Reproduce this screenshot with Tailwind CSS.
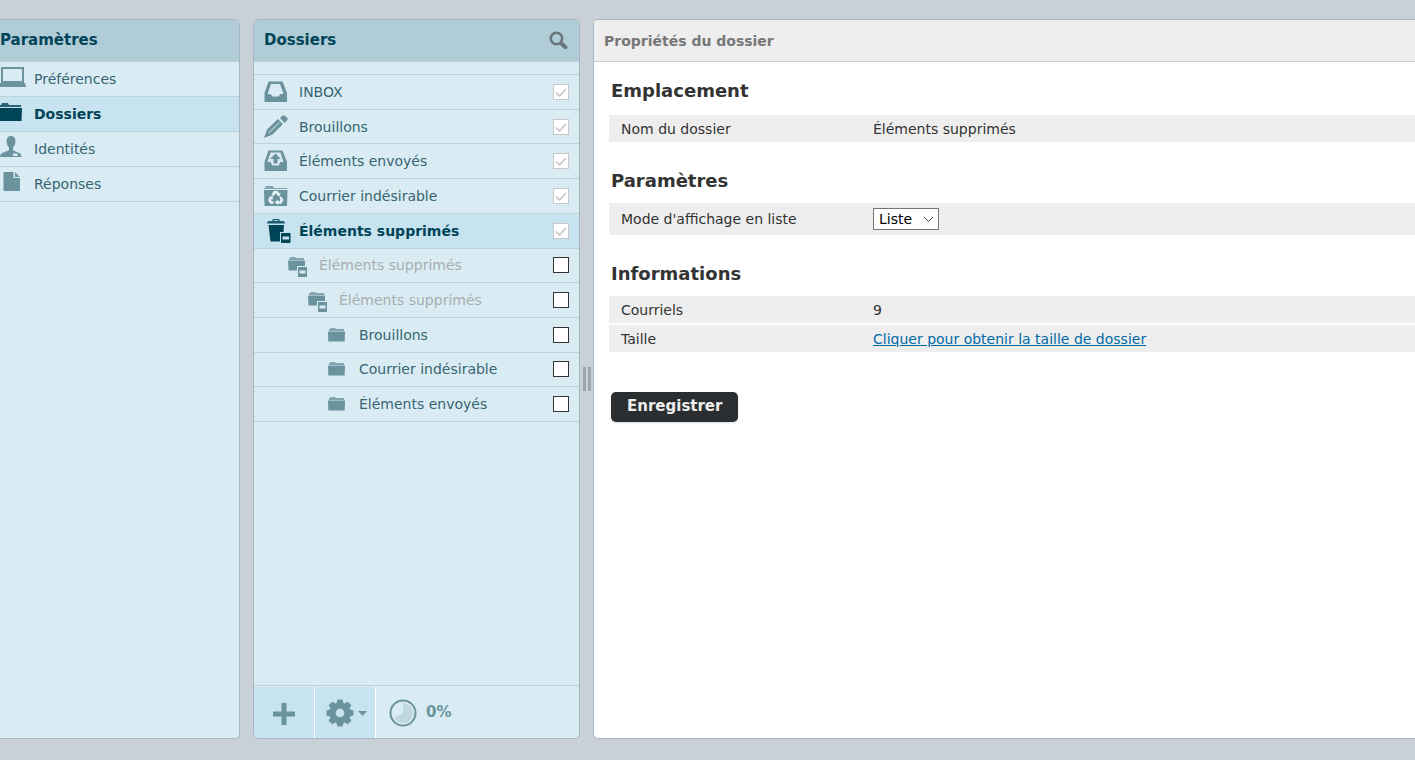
<!DOCTYPE html>
<html lang="fr">
<head>
<meta charset="utf-8">
<title>Dossiers</title>
<script src="https://cdn.jsdelivr.net/npm/@tailwindcss/browser@4"></script>
</head>
<body class="h-screen overflow-hidden bg-[#c9d0d8] font-['Verdana','DejaVu_Sans',sans-serif] text-sm text-[#376572]">
<svg class="hidden" aria-hidden="true">
  <symbol id="folder" viewBox="0 0 18 16"><path fill="currentColor" opacity=".8" d="M1 4V2h1L3 1h4l1 1h8v2z"/><path fill="currentColor" d="M0 4.500h17l-.3 10H.3z"/></symbol>
  <symbol id="subfolder" viewBox="0 0 20 22"><path fill="currentColor" opacity=".8" d="M1 4V2h1L3 1h4l1 1h8v2z"/><path fill="currentColor" d="M0 4.500h17V10H9v4.500H.5z"/><path fill="currentColor" fill-rule="evenodd" d="M10 11h9v10h-9zm1.500 3.500v3h6v-3z"/></symbol>
  <symbol id="tick" viewBox="0 0 16 16"><path fill="none" stroke="#c8c8c8" stroke-width="1.700" d="M3 8.500 6.500 12 13 5"/></symbol>
</svg>
<div class="flex h-full pt-[19px] pb-[21px]">
  <nav class="w-60 shrink-0 overflow-hidden rounded-r-[5px] border border-l-0 border-[#a9b6c1] bg-[#d9ecf4]">
    <h2 class="flex h-[42px] items-center border-b border-[#bbd3da] bg-[#b0ccd7] pt-px text-[15px] font-bold text-[#004458]">Paramètres</h2>
    <ul>
      <li class="h-[35px] border-b border-[#bbd3da]"><a href="#" class="flex h-full items-center">
        <svg class="h-6 w-[34px] shrink-0 -mt-1 text-[#6b939d]" viewBox="0 0 34 24"><path fill="none" stroke="currentColor" stroke-width="2" d="M2 3h21v14H2z"/><path fill="currentColor" d="M0 18h25l1 4H0z"/></svg>Préférences</a></li>
      <li class="h-[35px] border-b border-[#bbd3da] bg-[#c7e3ef] font-bold text-[#004458]"><a href="#" class="flex h-full items-center">
        <svg class="h-6 w-[34px] shrink-0 -mt-1" viewBox="0 0 34 24"><path fill="currentColor" opacity=".8" d="M0 5h1l1-2h6l1 2h12v2H0z"/><path fill="currentColor" d="M0 8h22l-.5 13H0z"/></svg>Dossiers</a></li>
      <li class="h-[35px] border-b border-[#bbd3da]"><a href="#" class="flex h-full items-center">
        <svg class="h-6 w-[34px] shrink-0 -mt-1 text-[#6b939d]" viewBox="0 0 34 24"><path fill="currentColor" d="M11 1c3 0 4.500 2 4.500 5 0 2-1 5-2.500 6.500V15c2 2 8.500 2 8.500 7H0c0-5 6.500-5 9-7v-2.500C7.500 11 6.500 8 6.500 6c0-3 1.500-5 4.500-5z"/><path fill="#d9ecf4" d="M13 18.500h4.500V21H13z"/></svg>Identités</a></li>
      <li class="h-[35px] border-b border-[#bbd3da]"><a href="#" class="flex h-full items-center">
        <svg class="h-6 w-[34px] shrink-0 -mt-1 text-[#6b939d]" viewBox="0 0 34 24"><path fill="currentColor" d="M3.500 2h10v6H20v13H3.500zM15 2l5 5h-5z"/></svg>Réponses</a></li>
    </ul>
  </nav>
  <div class="w-[13px] shrink-0"></div>
  <section class="flex w-[327px] shrink-0 flex-col overflow-hidden rounded-[5px] border border-[#a9b6c1] bg-[#d9ecf4]">
    <div class="flex h-[42px] shrink-0 items-center justify-between border-b border-[#bbd3da] bg-[#b0ccd7] px-2.5 font-bold text-[#004458]">
      <h2 class="pt-px text-[15px]">Dossiers</h2>
      <button type="button" aria-label="Rechercher"><svg class="size-5" viewBox="0 0 20 20"><circle cx="7.500" cy="7.500" r="5.700" fill="none" stroke="#68737a" stroke-width="2.500"/><path stroke="#68737a" stroke-width="4" stroke-linecap="round" d="m13 13 3.500 3.200"/></svg></button>
    </div>
    <div class="h-[13px] shrink-0 border-b border-[#bbd3da]"></div>
    <ul class="flex h-[347px] shrink-0 flex-col">
      <li class="flex flex-1 items-center border-b border-[#bbd3da] px-2.5">
        <svg class="mr-[11px] size-6 text-[#6b939d]" viewBox="0 0 24 24"><path fill="currentColor" fill-rule="evenodd" d="M4.500 1.500h14L23 13v9H.5v-9zM7 4 3.500 14h3l2 2.500h6l2-2.500h3L16 4z"/></svg>
        <label for="f1" class="flex-1">INBOX</label>
        <span class="relative size-4"><input id="f1" type="checkbox" checked disabled class="block size-4 appearance-none border border-[#c8c8c8] bg-white"><svg class="absolute inset-0 size-4"><use href="#tick"/></svg></span></li>
      <li class="flex flex-1 items-center border-b border-[#bbd3da] px-2.5">
        <svg class="mr-[11px] size-6 text-[#6b939d]" viewBox="0 0 24 24"><path fill="currentColor" d="m0 23 3-8.500L14 4l5 5L8.500 19.500zM16 3l2.500-2.500h2L23.500 3v2L20.500 8z"/><path stroke="#d9ecf4" d="m4.500 18 11-10.500"/></svg>
        <label for="f2" class="flex-1">Brouillons</label>
        <span class="relative size-4"><input id="f2" type="checkbox" checked disabled class="block size-4 appearance-none border border-[#c8c8c8] bg-white"><svg class="absolute inset-0 size-4"><use href="#tick"/></svg></span></li>
      <li class="flex flex-1 items-center border-b border-[#bbd3da] px-2.5">
        <svg class="mr-[11px] size-6 text-[#6b939d]" viewBox="0 0 24 24"><path fill="currentColor" fill-rule="evenodd" d="M4.500 1.500h14L23 13v9H.5v-9zM6.500 3.500 3.500 13h3l2 3.500h6l2-3.500h3l-3-9.500z"/><path fill="currentColor" d="m11.500 4.500 5.500 5.500h-3.500v4.500h-4V10H6z"/></svg>
        <label for="f3" class="flex-1">Éléments envoyés</label>
        <span class="relative size-4"><input id="f3" type="checkbox" checked disabled class="block size-4 appearance-none border border-[#c8c8c8] bg-white"><svg class="absolute inset-0 size-4"><use href="#tick"/></svg></span></li>
      <li class="flex flex-1 items-center border-b border-[#bbd3da] px-2.5">
        <svg class="mr-[11px] size-6 text-[#6b939d]" viewBox="0 0 24 24"><path fill="currentColor" opacity=".8" d="M0 5V4h1l1-2h7l1 2h13v1z"/><path fill="currentColor" d="M0 6h23.500L23 22H.5z"/><g fill="none" stroke="#e6f3f8" stroke-width="2.600"><path d="m8.500 11.500 2-3.200h2.500l1.500 2.500M16.500 13l1.500 3-1.500 2.500h-3M9.500 18.500H7L5.500 16 7 13.500"/></g><path fill="#e6f3f8" d="m16.500 8.500-.5 4-3.500-1.500zM14 15.500v5.500l-3-2.700zM4.500 13l4-1 .7 3.500z"/></svg>
        <label for="f4" class="flex-1">Courrier indésirable</label>
        <span class="relative size-4"><input id="f4" type="checkbox" checked disabled class="block size-4 appearance-none border border-[#c8c8c8] bg-white"><svg class="absolute inset-0 size-4"><use href="#tick"/></svg></span></li>
      <li class="flex flex-1 items-center border-b border-[#bbd3da] bg-[#c7e3ef] px-2.5 font-bold text-[#004458]">
        <svg class="mr-1.5 ml-0.5 h-6 w-[27px]" viewBox="0 0 27 24"><path fill="currentColor" opacity=".85" d="M1 4.500V3.500L2.500 2H6l1-2h6l1 2h3.500L19 3.500v1zM7.500 1.200V2h5v-.8z"/><path fill="currentColor" d="M2.500 6h15.500l-.5 7H14v9.500H4.500z"/><path fill="currentColor" fill-rule="evenodd" d="M15 14h9.500v10H15zm1.500 3.500v3H23v-3z"/></svg>
        <label for="f5" class="flex-1">Éléments supprimés</label>
        <span class="relative size-4"><input id="f5" type="checkbox" checked disabled class="block size-4 appearance-none border border-[#c8c8c8] bg-white"><svg class="absolute inset-0 size-4"><use href="#tick"/></svg></span></li>
      <li class="flex flex-1 items-center border-b border-[#bbd3da] pr-2.5 pl-[34px]">
        <svg class="mt-1 mr-[11px] h-[22px] w-5 text-[#6b939d]"><use href="#subfolder"/></svg>
        <label for="f6" class="flex-1 text-[#a9adaf]">Éléments supprimés</label>
        <input id="f6" type="checkbox" class="block size-4 appearance-none border border-[#333] bg-white"></li>
      <li class="flex flex-1 items-center border-b border-[#bbd3da] pr-2.5 pl-[54px]">
        <svg class="mt-1 mr-[11px] h-[22px] w-5 text-[#6b939d]"><use href="#subfolder"/></svg>
        <label for="f7" class="flex-1 text-[#a9adaf]">Éléments supprimés</label>
        <input id="f7" type="checkbox" class="block size-4 appearance-none border border-[#333] bg-white"></li>
      <li class="flex flex-1 items-center border-b border-[#bbd3da] pr-2.5 pl-[74px]">
        <svg class="mr-[13px] h-4 w-[18px] text-[#6b939d]"><use href="#folder"/></svg>
        <label for="f8" class="flex-1">Brouillons</label>
        <input id="f8" type="checkbox" class="block size-4 appearance-none border border-[#333] bg-white"></li>
      <li class="flex flex-1 items-center border-b border-[#bbd3da] pr-2.5 pl-[74px]">
        <svg class="mr-[13px] h-4 w-[18px] text-[#6b939d]"><use href="#folder"/></svg>
        <label for="f9" class="flex-1">Courrier indésirable</label>
        <input id="f9" type="checkbox" class="block size-4 appearance-none border border-[#333] bg-white"></li>
      <li class="flex flex-1 items-center border-b border-[#bbd3da] pr-2.5 pl-[74px]">
        <svg class="mr-[13px] h-4 w-[18px] text-[#6b939d]"><use href="#folder"/></svg>
        <label for="f10" class="flex-1">Éléments envoyés</label>
        <input id="f10" type="checkbox" class="block size-4 appearance-none border border-[#333] bg-white"></li>
    </ul>
    <div class="mt-auto flex h-[53px] shrink-0 border-t border-[#bbd3da] pt-px text-[#6b939d]">
      <button type="button" aria-label="Créer un dossier" class="flex w-[61px] items-center justify-center border-r border-white bg-[#c7e3ef]"><svg class="mt-0.5 size-[22px]" viewBox="0 0 22 22"><path fill="currentColor" d="M8.500 0h5v8.500H22v5h-8.500V22h-5v-8.500H0v-5h8.500z"/></svg></button>
      <button type="button" aria-label="Actions" class="flex w-[61px] items-center justify-center gap-1 border-r border-white bg-[#c7e3ef] pl-0.5"><svg class="size-7" viewBox="-14 -14 28 28"><g fill="currentColor"><path id="tooth" d="M-4-8.500-2.500-13.500h5l1.500 5z"/><use href="#tooth" transform="rotate(45)"/><use href="#tooth" transform="rotate(90)"/><use href="#tooth" transform="rotate(135)"/><use href="#tooth" transform="rotate(180)"/><use href="#tooth" transform="rotate(225)"/><use href="#tooth" transform="rotate(270)"/><use href="#tooth" transform="rotate(315)"/></g><circle r="7.300" fill="none" stroke="currentColor" stroke-width="6"/></svg><svg class="mt-0.5 h-[5px] w-[9px]" viewBox="0 0 9 5"><path fill="currentColor" d="M0 0h9L4.500 5z"/></svg></button>
      <div class="flex items-center gap-[9px] pl-[13px] text-[15px] font-bold"><svg class="size-7" viewBox="0 0 28 28"><circle cx="14" cy="14" r="12.500" fill="#d9ecf4" stroke="currentColor" stroke-width="2"/><path fill="#bfd7df" d="M14 14V4A10 10 0 1 1 5.500 19z"/></svg>0%</div>
    </div>
  </section>
  <div class="flex w-[13px] shrink-0 cursor-col-resize items-center justify-center gap-0.5"><i class="h-6 w-[3px] bg-[#9ca5ac]"></i><i class="h-6 w-[3px] bg-[#9ca5ac]"></i></div>
  <main class="min-w-0 flex-1 overflow-hidden rounded-l-[5px] border border-r-0 border-[#a9b6c1] bg-white text-[#333]">
    <h1 class="flex h-[42px] items-center border-b border-[#ccc] bg-[#eee] px-2.5 pt-px font-bold text-[#777]">Propriétés du dossier</h1>
    <form class="pt-4 pl-[15px]">
      <h2 class="mb-3 pl-0.5 text-lg leading-[25px] font-bold">Emplacement</h2>
      <table class="mb-[26px] w-full table-fixed border-collapse text-left">
        <tr class="h-[27px] bg-[#eee]"><th class="w-[264px] pl-3 font-normal">Nom du dossier</th><td>Éléments supprimés</td></tr>
      </table>
      <h2 class="mb-2.5 pl-0.5 text-lg leading-[25px] font-bold">Paramètres</h2>
      <table class="mb-[26px] w-full table-fixed border-collapse text-left">
        <tr class="h-8 bg-[#eee]"><th class="w-[264px] pl-3 font-normal"><label for="mode">Mode d'affichage en liste</label></th><td><span class="relative inline-block h-[22px] align-middle"><select id="mode" class="block h-[22px] w-[66px] appearance-none border border-[#767676] bg-white pl-[5px] text-black"><option>Liste</option><option>Fils</option></select><svg class="pointer-events-none absolute top-2 right-[5px] h-[7px] w-[11px]" viewBox="0 0 11 7"><path fill="none" stroke="#444" d="m1 1 4.500 4.500L10 1"/></svg></span></td></tr>
      </table>
      <h2 class="mb-2.5 pl-0.5 text-lg leading-[25px] font-bold">Informations</h2>
      <table class="w-full table-fixed border-collapse text-left">
        <tr class="h-7 bg-[#eee]"><th class="w-[264px] pl-3 font-normal">Courriels</th><td>9</td></tr>
        <tr class="h-7 border-t-2 border-white bg-[#eee]"><th class="pl-3 font-normal">Taille</th><td><a href="#" class="text-[#0069a6] underline">Cliquer pour obtenir la taille de dossier</a></td></tr>
      </table>
      <button type="button" class="mt-10 ml-0.5 h-[30px] rounded-[5px] bg-[#2b2e31] px-4 text-[15px] font-bold text-[#eee] shadow-sm">Enregistrer</button>
    </form>
  </main>
</div>
</body>
</html>
